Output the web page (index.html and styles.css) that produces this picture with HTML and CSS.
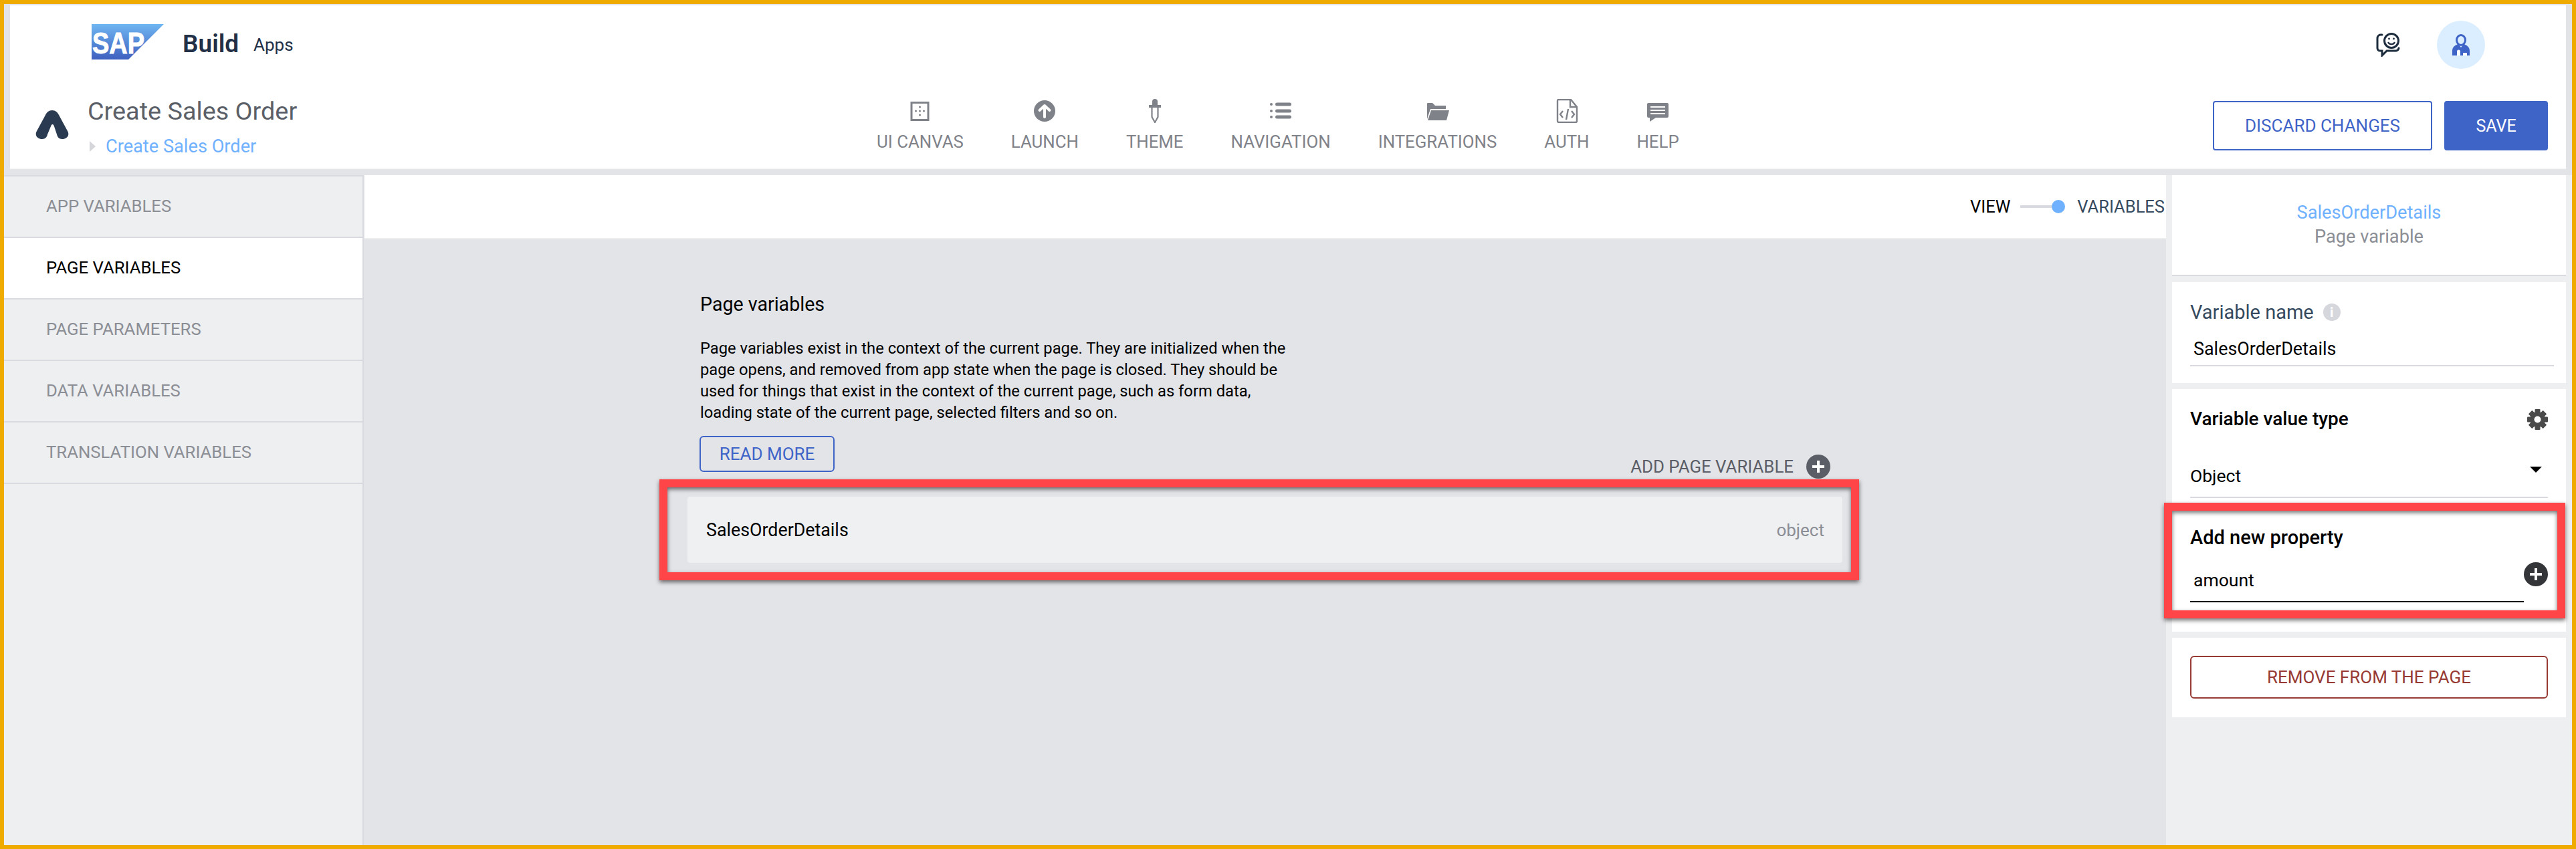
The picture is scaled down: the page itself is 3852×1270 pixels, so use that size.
FILE: index.html
```html
<!DOCTYPE html>
<html lang="en">
<head>
<meta charset="UTF-8" />
<title>SAP Build Apps - Page variables</title>
<link rel="stylesheet" href="styles.css">
</head>
<body>
<div class="frame">

  <header class="app-header">
    <div class="brand-row">
      <svg class="sap-logo" viewBox="0 0 108 53" width="108" height="53">
        <defs>
          <linearGradient id="sapFill" x1="0" y1="0" x2="0" y2="1">
            <stop offset="0" stop-color="#6fb6f2" />
            <stop offset="1" stop-color="#3f60bf" />
          </linearGradient>
        </defs>
        <polygon points="0,0 108,0 55,53 0,53" fill="url(#sapFill)" />
        <text x="1" y="44" class="sap-word" textLength="78" lengthAdjust="spacingAndGlyphs">SAP</text>
      </svg>
      <span class="brand-build">Build</span>
      <span class="brand-apps">Apps</span>
      <div class="user-tools">
        <svg width="37" height="36" viewBox="0 0 37 36" fill="none" stroke="#1d2d3e" stroke-width="3">
          <path d="M9 3 H7 a5 5 0 0 0 -5 5 V23 a4 4 0 0 0 4 4 h3 v7 l7 -7 h14 a5 5 0 0 0 4 -4" stroke-linecap="round" />
          <circle cx="23" cy="12" r="10.5" />
          <circle cx="19.5" cy="9" r="1.4" fill="#1d2d3e" stroke="none" />
          <circle cx="26.5" cy="9" r="1.4" fill="#1d2d3e" stroke="none" />
          <path d="M18 14 a5.5 5.5 0 0 0 10 0" stroke-width="2.2" />
        </svg>
        <div class="avatar">
          <svg width="28" height="32" viewBox="0 0 28 32">
            <ellipse cx="14" cy="9" rx="6.5" ry="7.5" fill="none" stroke="#3f64c8" stroke-width="3" />
            <path d="M1 32 V25 C1 19 6 16 10 15 L14 20 L18 15 C22 16 27 19 27 25 V32 Z" fill="#3f64c8" />
            <path d="M8 32 V26 a2.5 2.5 0 0 1 5 0 V32 Z M17 28 h6 v4 h-6 Z" fill="#fff" />
          </svg>
        </div>
      </div>
    </div>

    <div class="project-row">
      <svg class="project-mark" width="50" height="43" viewBox="0 0 50 43">
        <path d="M25 0 C30 0 33 3 35 7 L48 31 C52 38 46 43 40 43 C35 43 33 40 32 36 L28 24 C27 20 24 20 23 24 L18 36 C17 40 15 43 10 43 C4 43 -2 38 2 31 L15 7 C17 3 20 0 25 0 Z" fill="#2a3a50" />
      </svg>
      <div class="project-name">
        <div class="project-title">Create Sales Order</div>
        <div class="project-crumb"><span class="crumb-arrow"></span>Create Sales Order</div>
      </div>

      <nav class="main-nav">
        <div class="nav-item">
          <svg width="36" height="36" viewBox="0 0 36 36" fill="#7f8289">
            <rect x="5" y="5.5" width="25" height="26" fill="none" stroke="#7f8289" stroke-width="3" />
            <circle cx="17.5" cy="12" r="1.5" /><circle cx="11.5" cy="18" r="1.5" /><circle cx="17.5" cy="18" r="1.5" /><circle cx="23.5" cy="18" r="1.5" /><circle cx="17.5" cy="24" r="1.5" />
          </svg>
          <span>UI CANVAS</span>
        </div>
        <div class="nav-item">
          <svg width="36" height="36" viewBox="0 0 36 36">
            <circle cx="18" cy="18" r="16" fill="#7f8289" />
            <path d="M18 27 V11 M10.5 17 L18 10 L25.5 17" fill="none" stroke="#fff" stroke-width="4" stroke-linecap="round" stroke-linejoin="round" />
          </svg>
          <span>LAUNCH</span>
        </div>
        <div class="nav-item">
          <svg width="36" height="36" viewBox="0 0 36 36">
            <path d="M14 10 V4 a4 4 0 0 1 8 0 V10 Z" fill="#7f8289" />
            <rect x="9" y="9" width="18" height="4" fill="#7f8289" />
            <path d="M13.5 13 V27 L18 35 L22.5 27 V13" fill="none" stroke="#7f8289" stroke-width="2.2" />
          </svg>
          <span>THEME</span>
        </div>
        <div class="nav-item">
          <svg width="36" height="36" viewBox="0 0 36 36" fill="#7f8289">
            <circle cx="4" cy="8" r="2" /><circle cx="4" cy="18" r="2" /><circle cx="4" cy="27" r="2" />
            <rect x="10" y="5.5" width="24" height="5" rx="2.5" /><rect x="10" y="15.5" width="24" height="5" rx="2.5" /><rect x="10" y="24.5" width="24" height="5" rx="2.5" />
          </svg>
          <span>NAVIGATION</span>
        </div>
        <div class="nav-item">
          <svg width="36" height="36" viewBox="0 0 36 36" fill="#7f8289">
            <path d="M2 7 a1 1 0 0 1 1 -1 H10 L14 10 H30 V15 H7 L2 30 Z" />
            <path d="M8 17 H35 L31 32 H3 Z" />
          </svg>
          <span>INTEGRATIONS</span>
        </div>
        <div class="nav-item">
          <svg width="36" height="36" viewBox="0 0 36 36" fill="none" stroke="#7f8289" stroke-width="2.4">
            <path d="M4 3 a2 2 0 0 1 1 -2 H24 L33 12 V33 a2 2 0 0 1 -2 2 H6 a2 2 0 0 1 -2 -2 Z" />
            <path d="M23 2 V12 H33" />
            <path d="M12 18 L8 23 L12 28 M25 18 L29 23 L25 28 M20 15 L17 31" />
          </svg>
          <span>AUTH</span>
        </div>
        <div class="nav-item">
          <svg width="36" height="36" viewBox="0 0 36 36">
            <path d="M4 6 H32 a2 2 0 0 1 2 2 V26 a2 2 0 0 1 -2 2 H15 L6 34 V28 H4 a2 2 0 0 1 -2 -2 V8 a2 2 0 0 1 2 -2 Z" fill="#7f8289" />
            <path d="M7 12 H29 M7 17 H29 M7 22 H29" stroke="#fff" stroke-width="2" />
          </svg>
          <span>HELP</span>
        </div>
      </nav>

      <div class="header-actions">
        <button class="btn btn-outline btn-discard">DISCARD CHANGES</button>
        <button class="btn btn-primary">SAVE</button>
      </div>
    </div>
  </header>

  <div class="workspace">
    <aside class="side-menu">
      <div class="side-item">APP VARIABLES</div>
      <div class="side-item active">PAGE VARIABLES</div>
      <div class="side-item">PAGE PARAMETERS</div>
      <div class="side-item">DATA VARIABLES</div>
      <div class="side-item">TRANSLATION VARIABLES</div>
    </aside>

    <main class="canvas">
      <div class="view-bar">
        <span class="view-label">VIEW</span>
        <span class="view-toggle"><span class="view-knob"></span></span>
        <span class="view-current">VARIABLES</span>
      </div>
      <div class="canvas-body">
        <div class="var-column">
          <div class="intro-row">
            <div class="intro">
              <h1 class="intro-title">Page variables</h1>
              <p class="intro-text">Page variables exist in the context of the current page. They are initialized when the<br>page opens, and removed from app state when the page is closed. They should be<br>used for things that exist in the context of the current page, such as form data,<br>loading state of the current page, selected filters and so on.</p>
              <button class="btn btn-outline btn-read">READ MORE</button>
            </div>
            <div class="add-var">
              <span>ADD PAGE VARIABLE</span>
              <svg width="36" height="36" viewBox="0 0 36 36">
                <circle cx="18" cy="18" r="18" fill="#5b5e66" />
                <path d="M18 9 V27 M9 18 H27" stroke="#fff" stroke-width="4" />
              </svg>
            </div>
          </div>
          <div class="var-card">
            <span class="var-name">SalesOrderDetails</span>
            <span class="var-type">object</span>
          </div>
        </div>
      </div>
    </main>

    <aside class="props">
      <section class="prop-card prop-head">
        <div class="prop-link">SalesOrderDetails</div>
        <div class="prop-sub">Page variable</div>
      </section>
      <section class="prop-card prop-name">
        <div class="prop-label">Variable name <span class="info-dot">i</span></div>
        <div class="prop-input">SalesOrderDetails</div>
      </section>
      <section class="prop-card prop-type">
        <div class="prop-title-row">
          <span class="prop-title">Variable value type</span>
          <svg width="31" height="31" viewBox="0 0 31 31" fill="#4a4a4a">
            <g transform="translate(15.5 15.5)">
              <rect x="-4" y="-15.5" width="8" height="31" rx="1" />
              <rect x="-4" y="-15.5" width="8" height="31" rx="1" transform="rotate(45)" />
              <rect x="-4" y="-15.5" width="8" height="31" rx="1" transform="rotate(90)" />
              <rect x="-4" y="-15.5" width="8" height="31" rx="1" transform="rotate(135)" />
              <circle r="11.5" />
              <circle r="5" fill="#fff" />
            </g>
          </svg>
        </div>
        <div class="prop-select">
          <span>Object</span>
          <span class="select-caret"></span>
        </div>
        <div class="prop-title new-prop">Add new property</div>
        <div class="new-row">
          <div class="new-input">amount</div>
          <svg class="new-add" width="36" height="36" viewBox="0 0 36 36">
            <circle cx="18" cy="18" r="18" fill="#333538" />
            <path d="M18 9 V27 M9 18 H27" stroke="#fff" stroke-width="4" />
          </svg>
        </div>
      </section>
      <section class="prop-card prop-remove">
        <button class="btn btn-danger">REMOVE FROM THE PAGE</button>
      </section>
    </aside>
  </div>

  <div class="callout callout-list"></div>
  <div class="callout callout-prop"></div>
</div>
</body>
</html>
```

FILE: styles.css
```css
html, body {
  margin: 0;
  padding: 0;
}
body {
  font-family: Roboto, 'Noto Sans', sans-serif;
  color: #1d2d3e;
}
.frame {
  position: relative;
  box-sizing: border-box;
  width: 3852px;
  height: 1270px;
  border: 6px solid #f0ab00;
  background: #e3e4e8;
  padding-top: 2px;
  display: flex;
  flex-direction: column;
  overflow: hidden;
}

/* header */
.app-header {
  margin: 0 9px;
  height: 245px;
  box-sizing: border-box;
  background: #fff;
  border-bottom: 2px solid #f8f8f9;
  flex: none;
}
.brand-row {
  height: 120px;
  box-sizing: border-box;
  padding: 28px 121px 0 122px;
  display: flex;
  align-items: flex-start;
}
.sap-word {
  font-family: 'Liberation Sans', sans-serif;
  font-weight: 700;
  font-size: 44px;
  fill: #fff;
  stroke: #fff;
  stroke-width: 1px;
}
.brand-build {
  margin-left: 28px;
  width: 106px;
  font-size: 37px;
  font-weight: 600;
  line-height: 60px;
  color: #223047;
}
.brand-apps {
  font-size: 26px;
  line-height: 62px;
  color: #223047;
}
.user-tools {
  margin-left: auto;
  margin-top: -5px;
  display: flex;
  align-items: center;
  gap: 54px;
}
.avatar {
  width: 72px;
  height: 72px;
  border-radius: 50%;
  background: #dbeeff;
  display: flex;
  align-items: center;
  justify-content: center;
}
.project-row {
  display: flex;
  align-items: flex-start;
  padding-left: 38px;
}
.project-mark {
  margin-top: 37px;
  flex: none;
}
.project-name {
  width: 1180px;
  margin-left: 28px;
  padding-top: 18px;
}
.project-title {
  font-size: 37.8px;
  line-height: 40px;
  color: #5b5f68;
}
.project-crumb {
  margin-top: 16px;
  display: flex;
  align-items: center;
  font-size: 27.2px;
  line-height: 34px;
  color: #6fb1ff;
}
.crumb-arrow {
  width: 0;
  height: 0;
  margin: 0 15px 0 3px;
  border-left: 9px solid #d5d6da;
  border-top: 8px solid transparent;
  border-bottom: 8px solid transparent;
}
.main-nav {
  display: flex;
  gap: 71px;
  padding-top: 20px;
}
.nav-item {
  display: flex;
  flex-direction: column;
  align-items: center;
  gap: 14px;
  font-size: 25.8px;
  line-height: 28px;
  color: #7f8289;
}
.header-actions {
  margin-left: auto;
  margin-right: 27px;
  padding-top: 23px;
  display: flex;
  gap: 18px;
}
.btn {
  box-sizing: border-box;
  font-family: inherit;
  font-size: 26px;
  border-radius: 4px;
  padding: 0;
  background: transparent;
}
.btn-outline {
  border: 2px solid #3f64c8;
  color: #3f64c8;
}
.btn-discard {
  width: 328px;
  height: 74px;
  background: #fff;
}
.btn-primary {
  width: 155px;
  height: 74px;
  border: none;
  background: #3f64c8;
  color: #fff;
  font-size: 25px;
}
.btn-read {
  display: block;
  width: 202px;
  height: 54px;
  margin: 19px 0 10px -1px;
  border-radius: 6px;
}
.btn-danger {
  width: 100%;
  height: 64px;
  background: #fff;
  border: 2px solid #963a33;
  color: #963a33;
  border-radius: 6px;
}

/* body */
.workspace {
  flex: 1;
  margin-top: 9px;
  display: flex;
  min-height: 0;
}
.side-menu {
  box-sizing: border-box;
  width: 538px;
  flex: none;
  background: #eeeff1;
  border-top: 2px solid #d9dadf;
  border-right: 2px solid #d9dadf;
  margin-right: 1px;
}
.side-item {
  box-sizing: border-box;
  height: 92px;
  padding: 0 0 3px 63px;
  display: flex;
  align-items: center;
  border-bottom: 2px solid #d9dadf;
  font-size: 25.7px;
  color: #8b8e95;
}
.side-item.active {
  background: #fff;
  color: #000;
}
.canvas {
  flex: 1;
  display: flex;
  flex-direction: column;
  min-width: 0;
}
.view-bar {
  box-sizing: border-box;
  height: 96px;
  flex: none;
  background: #fff;
  border-bottom: 2px solid #eceded;
  padding-right: 2px;
  display: flex;
  align-items: center;
  justify-content: flex-end;
  font-size: 25.5px;
}
.view-label {
  color: #000;
}
.view-toggle {
  position: relative;
  width: 48px;
  height: 4px;
  margin: 0 37px 0 15px;
  background: #d9dadf;
}
.view-knob {
  position: absolute;
  right: -19px;
  top: -8px;
  width: 20px;
  height: 20px;
  border-radius: 50%;
  background: #6fb1ff;
}
.view-current {
  color: #354a5f;
}
.canvas-body {
  flex: 1;
  padding: 77px 484px 0 483px;
}
.intro-row {
  display: flex;
  justify-content: space-between;
  align-items: flex-end;
  padding: 0 18px 0 19px;
}
.intro-title {
  margin: 0;
  font-size: 28.6px;
  font-weight: 400;
  line-height: 40px;
  color: #000;
}
.intro-text {
  margin: 30px 0 0;
  font-size: 23.75px;
  line-height: 32px;
  white-space: nowrap;
  color: #000;
}
.add-var {
  display: flex;
  align-items: center;
  gap: 19px;
  font-size: 25.8px;
  color: #5b5e66;
}
.add-var svg {
  display: block;
}
.var-card {
  margin-top: 27px;
  height: 99px;
  box-sizing: border-box;
  padding: 0 27px 0 28px;
  border-radius: 4px;
  background: #eff0f2;
  display: flex;
  align-items: center;
  justify-content: space-between;
  font-size: 26.8px;
}
.var-name {
  color: #000;
}
.var-type {
  font-size: 26px;
  color: #8b8e95;
}

/* right panel */
.props {
  box-sizing: border-box;
  width: 607px;
  flex: none;
  background: #eeeff1;
  padding: 0 9px;
}
.prop-card {
  background: #fff;
  margin-bottom: 9px;
  box-sizing: border-box;
}
.prop-head {
  height: 151px;
  border-bottom: 2px solid #d9dadf;
  padding-top: 38px;
  text-align: center;
}
.prop-link {
  font-size: 27.2px;
  line-height: 36px;
  color: #6fb1ff;
}
.prop-sub {
  font-size: 27.2px;
  line-height: 36px;
  color: #8b8e95;
}
.prop-name {
  height: 151px;
  padding: 27px 18px 0 27px;
}
.prop-label {
  display: flex;
  align-items: center;
  gap: 14px;
  font-size: 29px;
  line-height: 36px;
  color: #354a5f;
}
.info-dot {
  width: 26px;
  height: 26px;
  border-radius: 50%;
  background: #d6d7dc;
  color: #fff;
  font-size: 20px;
  font-weight: 700;
  line-height: 26px;
  text-align: center;
}
.prop-input {
  margin-top: 19px;
  padding: 0 5px 6px;
  font-size: 26.9px;
  line-height: 36px;
  color: #000;
  border-bottom: 2px solid #d9dadf;
}
.prop-type {
  height: 363px;
  padding: 27px 27px 0 27px;
}
.prop-title-row {
  display: flex;
  justify-content: space-between;
  align-items: center;
  height: 36px;
}
.prop-title {
  font-size: 28px;
  font-weight: 500;
  line-height: 36px;
  color: #000;
}
.prop-select {
  margin-top: 49px;
  height: 49px;
  display: flex;
  justify-content: space-between;
  font-size: 26.5px;
  line-height: 36px;
  color: #000;
  border-bottom: 2px solid #d9dadf;
}
.select-caret {
  width: 0;
  height: 0;
  margin: 4px 9px 0 0;
  border-top: 9px solid #000;
  border-left: 9px solid transparent;
  border-right: 9px solid transparent;
}
.new-prop {
  margin-top: 41px;
  font-size: 29px;
}
.new-row {
  display: flex;
  align-items: flex-start;
  margin-top: 19px;
}
.new-input {
  flex: 1;
  height: 60px;
  box-sizing: border-box;
  padding: 9px 5px 0;
  font-size: 26.5px;
  line-height: 36px;
  color: #000;
  border-bottom: 2px solid #000;
}
.prop-remove {
  padding: 27px 27px 0 27px;
  height: 119px;
}

/* review markers drawn on top of the screenshot */
.callout {
  position: absolute;
  box-sizing: border-box;
  border: 12px solid #ff4548;
  filter: drop-shadow(0 3px 3px rgba(0, 0, 0, 0.55));
}
.callout-list {
  left: 980px;
  top: 711px;
  width: 1794px;
  height: 151px;
}
.callout-prop {
  left: 3230px;
  top: 746px;
  width: 600px;
  height: 173px;
}
```
